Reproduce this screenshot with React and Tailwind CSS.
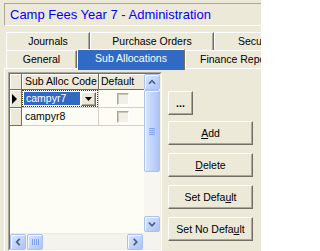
import React from "react";

const tabBase =
  "h-[18px] shrink-0 border-t border-l border-white border-r border-r-[#716f64] shadow-[inset_-1px_0_0_#aca899] flex items-center justify-center text-black";

function Chevron({ dir }) {
  const pts = {
    up: "4.5,10 8,6.5 11.5,10",
    down: "4.5,6.5 8,10 11.5,6.5",
    left: "10,4.5 6.5,8 10,11.5",
    right: "6.5,4.5 10,8 6.5,11.5",
  }[dir];
  return (
    <svg width="16" height="16" viewBox="0 0 16 16">
      <polyline points={pts} fill="none" stroke="#4d6185" strokeWidth="2" />
    </svg>
  );
}

function SBtn({ dir }) {
  return (
    <div className="w-[16px] h-[16px] shrink-0 rounded-[2px] border border-[#a9c0f2] bg-[linear-gradient(135deg,#dae6fe,#abc3f7)] shadow-[inset_1px_1px_0_#f4f8ff] flex items-center justify-center overflow-hidden">
      <Chevron dir={dir} />
    </div>
  );
}

function Btn({ children, w = "w-[85px]", extra = "" }) {
  return (
    <div
      className={`${w} h-[24px] shrink-0 border border-t-white border-l-white border-r-[#716f64] border-b-[#716f64] shadow-[inset_-1px_-1px_0_#aca899] bg-[#ece9d8] flex items-center justify-center text-black text-[10.5px] ${extra}`}
    >
      {children}
    </div>
  );
}

function Check() {
  return (
    <div className="w-[12px] h-[12px] border border-t-[#aca899] border-l-[#aca899] border-r-white border-b-white shadow-[inset_1px_1px_0_#c9c6b8] bg-[#f0efe8]" />
  );
}

function IndCell({ children }) {
  return (
    <div className="w-[12px] h-full shrink-0 bg-[#ece9d8] border-r border-b border-[#716f64] shadow-[inset_1px_1px_0_#fff] flex items-center justify-center">
      {children}
    </div>
  );
}

export default function App() {
  return (
    <div className="w-[261px] h-[251px] overflow-hidden bg-[#ece9d8] flex flex-col font-['Liberation_Sans',Arial,sans-serif] text-[10.5px] leading-none">
      {/* Title */}
      <div className="ml-[4px] mt-[3px] h-[23px] w-[300px] shrink-0 border border-t-[#aca899] border-l-[#aca899] border-b-white border-r-white flex items-center pl-[5px] text-[13px] text-[#0000ff]">
        Camp Fees Year 7 - Administration
      </div>

      {/* Tab row 1 */}
      <div className="ml-[6px] mt-[6px] flex shrink-0">
        <div className={`${tabBase} w-[84px]`}>Journals</div>
        <div className={`${tabBase} w-[124px]`}>Purchase Orders</div>
        <div className={`${tabBase} w-[86px]`}>Security</div>
      </div>

      {/* Tab row 2 */}
      <div className="ml-[6px] flex shrink-0 h-[18px] items-start">
        <div className={`${tabBase} w-[71px]`}>General</div>
        <div className="relative z-10 -mt-[1px] h-[21px] w-[108px] shrink-0 bg-[#316ac5] text-white border-t border-l border-white border-r border-r-[#716f64] flex justify-center pt-[3px]">
          Sub Allocations
        </div>
        <div className={`${tabBase} w-[107px]`}>Finance Reports</div>
      </div>

      {/* Panel */}
      <div className="ml-[4px] flex-1 min-h-0 border-t border-l border-white pt-[3px] pl-[3px] flex items-start">
        {/* Grid */}
        <div className="w-[154px] h-[179px] shrink-0 border border-t-[#aca899] border-l-[#aca899] border-r-white border-b-white">
          <div className="w-full h-full border border-t-[#716f64] border-l-[#716f64] border-r-[#f1efe2] border-b-[#f1efe2] flex bg-[#fdfdf6]">
            {/* Left data area */}
            <div className="w-[134px] h-full flex flex-col">
              {/* Header */}
              <div className="h-[16px] flex shrink-0">
                <IndCell />
                <div className="w-[77px] h-full bg-[#ece9d8] border-r border-b border-[#716f64] shadow-[inset_1px_1px_0_#fff] flex items-center pl-[3px] text-black">
                  Sub Alloc Code
                </div>
                <div className="w-[45px] h-full bg-[#ece9d8] border-b border-[#716f64] shadow-[inset_1px_1px_0_#fff] flex items-center pl-[2px] text-black">
                  Default
                </div>
              </div>
              {/* Row 1 */}
              <div className="h-[18px] flex shrink-0">
                <IndCell>
                  <svg width="6" height="10" viewBox="0 0 6 10" className="-ml-[2px]">
                    <polygon points="0,0 5,5 0,10" fill="#000" />
                  </svg>
                </IndCell>
                <div className="w-[77px] h-full border-r border-b border-[#d4d0c8] flex">
                  <div className="flex-1 border border-dotted border-[#5a3a00] flex items-center gap-[1px] pl-[1px] pr-[1px]">
                    <div className="flex-1 h-[13px] bg-[#316ac5] text-white flex items-center pl-[2px]">
                      campyr7
                    </div>
                    <div className="w-[15px] h-[14px] shrink-0 bg-[#ece9d8] border border-t-white border-l-white border-r-[#716f64] border-b-[#716f64] shadow-[inset_-1px_-1px_0_#aca899] flex items-center justify-center">
                      <svg width="7" height="4" viewBox="0 0 7 4">
                        <polygon points="0,0 7,0 3.5,4" fill="#000" />
                      </svg>
                    </div>
                  </div>
                </div>
                <div className="w-[45px] h-full border-b border-[#d4d0c8] flex items-center justify-center pl-[3px]">
                  <Check />
                </div>
              </div>
              {/* Row 2 */}
              <div className="h-[18px] flex shrink-0">
                <IndCell />
                <div className="w-[77px] h-full border-r border-b border-[#d4d0c8] flex items-center pl-[3px] text-black">
                  campyr8
                </div>
                <div className="w-[45px] h-full border-b border-[#d4d0c8] flex items-center justify-center pl-[3px]">
                  <Check />
                </div>
              </div>
              <div className="flex-1" />
              {/* Horizontal scrollbar */}
              <div className="h-[16px] shrink-0 flex bg-[#f4f3ee] border-t border-[#ebeae3]">
                <SBtn dir="left" />
                <div className="ml-[1px] w-[16px] h-[16px] shrink-0 rounded-[2px] border border-[#a9c0f2] bg-[linear-gradient(135deg,#dae6fe,#abc3f7)] shadow-[inset_1px_1px_0_#f4f8ff] flex items-center justify-center gap-[1px]">
                  <div className="w-[1px] h-[6px] bg-[#7fa3ee]" />
                  <div className="w-[1px] h-[6px] bg-[#7fa3ee]" />
                  <div className="w-[1px] h-[6px] bg-[#7fa3ee]" />
                  <div className="w-[1px] h-[6px] bg-[#7fa3ee]" />
                </div>
                <div className="flex-1" />
                <SBtn dir="right" />
                <div className="w-[1px]" />
              </div>
            </div>
            {/* Vertical scrollbar */}
            <div className="w-[16px] h-full flex flex-col bg-[#f7f6f1]">
              <SBtn dir="up" />
              <div className="h-[82px] shrink-0 rounded-[2px] border border-[#a9c0f2] bg-[linear-gradient(90deg,#dae6fe,#abc3f7)] shadow-[inset_1px_1px_0_#f4f8ff] flex flex-col items-center justify-center gap-[1px]">
                <div className="w-[6px] h-[1px] bg-[#7fa3ee]" />
                <div className="w-[6px] h-[1px] bg-[#7fa3ee]" />
                <div className="w-[6px] h-[1px] bg-[#7fa3ee]" />
                <div className="w-[6px] h-[1px] bg-[#7fa3ee]" />
              </div>
              <div className="flex-1" />
              <SBtn dir="down" />
              <div className="h-[17px] shrink-0 bg-[#f4f3ee]" />
            </div>
          </div>
        </div>

        {/* Buttons */}
        <div className="ml-[6px] mt-[19px] flex flex-col shrink-0">
          <Btn w="w-[25px]" extra="font-bold">...</Btn>
          <div className="h-[6px]" />
          <Btn>
            <span className="underline">A</span>dd
          </Btn>
          <div className="h-[8px]" />
          <Btn>
            <span className="underline">D</span>elete
          </Btn>
          <div className="h-[8px]" />
          <Btn>
            Set Defa<span className="underline">u</span>lt
          </Btn>
          <div className="h-[8px]" />
          <Btn>
            Set No Defa<span className="underline">u</span>lt
          </Btn>
        </div>
      </div>
    </div>
  );
}
